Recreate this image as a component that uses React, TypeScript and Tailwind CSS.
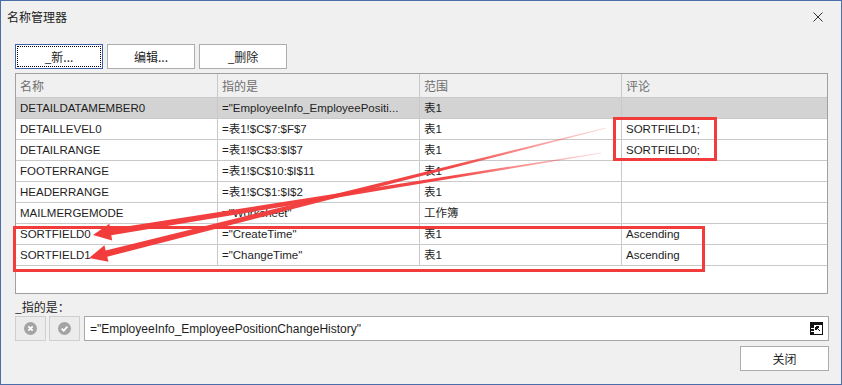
import React from 'react';

const rows: string[][] = [
  ['DETAILDATAMEMBER0', '="EmployeeInfo_EmployeePositi...', '表1', ''],
  ['DETAILLEVEL0', '=表1!$C$7:$F$7', '表1', 'SORTFIELD1;'],
  ['DETAILRANGE', '=表1!$C$3:$I$7', '表1', 'SORTFIELD0;'],
  ['FOOTERRANGE', '=表1!$C$10:$I$11', '表1', ''],
  ['HEADERRANGE', '=表1!$C$1:$I$2', '表1', ''],
  ['MAILMERGEMODE', '="Worksheet"', '工作簿', ''],
  ['SORTFIELD0', '="CreateTime"', '表1', 'Ascending'],
  ['SORTFIELD1', '="ChangeTime"', '表1', 'Ascending'],
];

// tapered arrow shape from (sx,sy) to tip (tx,ty)
const arrowPoints = (sx: number, sy: number, tx: number, ty: number) => {
  const dx = tx - sx;
  const dy = ty - sy;
  const len = Math.sqrt(dx * dx + dy * dy);
  const ux = dx / len;
  const uy = dy / len;
  const nx = -uy;
  const ny = ux;
  const bx = tx - 18 * ux;
  const by = ty - 18 * uy;
  const p = (x: number, y: number, w: number) => `${x + nx * w},${y + ny * w}`;
  return [
    p(sx, sy, 0.6),
    p(bx, by, 3.2),
    p(bx, by, 8.5),
    `${tx},${ty}`,
    p(bx, by, -8.5),
    p(bx, by, -3.2),
    p(sx, sy, -0.6),
  ].join(' ');
};

const Cell: React.FC<{ text: string; last?: boolean; header?: boolean }> = ({ text, last, header }) => (
  <div
    className={`flex items-center pl-[4px] overflow-hidden whitespace-nowrap ${last ? '' : 'border-r border-[#c9c9c9]'} ${
      header ? 'text-[#6e6e6e]' : 'pt-[2px]'
    }`}
  >
    {text}
  </div>
);

const App: React.FC = () => {
  return (
    <div className="relative w-[842px] h-[385px] overflow-hidden bg-[#f0f0f0] border border-[#4b6da9] font-['Liberation_Sans','Noto_Sans_CJK_SC',sans-serif] text-[11.5px] text-[#1e1e1e]">
      {/* title bar */}
      <div className="h-[31px] flex items-center justify-between pl-[6px] pr-[18px]">
        <span className="font-['Noto_Sans_CJK_SC',sans-serif] text-[12px] text-[#222]">名称管理器</span>
        <svg width="10" height="10" viewBox="0 0 10 10">
          <path d="M0.5 0.5 L9.5 9.5 M9.5 0.5 L0.5 9.5" stroke="#333" strokeWidth="1" />
        </svg>
      </div>

      {/* buttons */}
      <div className="flex gap-[4px] pl-[14px] mt-[12px]">
        <button className="w-[88px] h-[25px] bg-white border border-[#3d62a6] outline-1 outline-dotted outline-black -outline-offset-3 text-[12px] font-['Noto_Sans_CJK_SC',sans-serif]">
          _新...
        </button>
        <button className="w-[88px] h-[25px] bg-white border border-[#adadad] text-[12px] font-['Noto_Sans_CJK_SC',sans-serif]">
          编辑...
        </button>
        <button className="w-[88px] h-[25px] bg-white border border-[#adadad] text-[12px] font-['Noto_Sans_CJK_SC',sans-serif]">
          _删除
        </button>
      </div>

      {/* names table */}
      <div className="ml-[14px] mt-[4px] w-[813px] h-[221px] bg-white border border-[#a0a0a0] flex flex-col">
        <div className="h-[24px] shrink-0 grid grid-cols-[202px_202px_202px_1fr] bg-[#f0f0f0] border-b border-[#c9c9c9] font-['Noto_Sans_CJK_SC',sans-serif] text-[12px]">
          <Cell text="名称" header />
          <Cell text="指的是" header />
          <Cell text="范围" header />
          <Cell text="评论" header last />
        </div>
        {rows.map((r, i) => (
          <div
            key={i}
            className={`h-[21px] shrink-0 grid grid-cols-[202px_202px_202px_1fr] border-b border-[#c9c9c9] ${
              i === 0 ? 'bg-[#d3d3d3]' : ''
            }`}
          >
            <Cell text={r[0]} />
            <Cell text={r[1]} />
            <Cell text={r[2]} />
            <Cell text={r[3]} last />
          </div>
        ))}
      </div>

      {/* refers to */}
      <div className="h-[18px] mt-[4px] ml-[14px] flex items-center font-['Noto_Sans_CJK_SC',sans-serif] text-[12px]">
        _指的是：
      </div>
      <div className="h-[25px] flex pl-[14px] pr-[12px]">
        <div className="w-[31px] h-[25px] flex items-center justify-center bg-[#ececec] border border-[#cfcfcf]">
          <svg width="13" height="13" viewBox="0 0 13 13">
            <circle cx="6.5" cy="6.5" r="6.5" fill="#a3a3a3" />
            <path d="M4.3 4.3 L8.7 8.7 M8.7 4.3 L4.3 8.7" stroke="#fff" strokeWidth="1.8" />
          </svg>
        </div>
        <div className="ml-[3px] w-[31px] h-[25px] flex items-center justify-center bg-[#ececec] border border-[#cfcfcf]">
          <svg width="13" height="13" viewBox="0 0 13 13">
            <circle cx="6.5" cy="6.5" r="6.5" fill="#a3a3a3" />
            <path d="M3.6 6.6 L5.7 8.6 L9.4 4.6" stroke="#fff" strokeWidth="1.8" fill="none" />
          </svg>
        </div>
        <div className="ml-[4px] flex-1 h-[25px] bg-white border border-[#a8a8a8] flex items-center justify-between pl-[5px] pr-[5px] text-[12px]">
          <span className="pt-[1px]">="EmployeeInfo_EmployeePositionChangeHistory"</span>
          <svg width="13" height="13" viewBox="0 0 13 13" shapeRendering="crispEdges">
            <rect x="0.5" y="0.5" width="12" height="12" fill="#fff" stroke="#111" />
            <rect x="0" y="0" width="13" height="3" fill="#111" />
            <rect x="0" y="0" width="4" height="13" fill="#111" />
            <path d="M1 6.5 H4 M1 9.5 H4" stroke="#fff" />
            <path d="M6 5 L10 9 M6 5 H9 M6 5 V8" stroke="#111" strokeWidth="1.2" />
          </svg>
        </div>
      </div>

      <div className="flex justify-end pr-[12px] mt-[5px]">
        <button className="w-[89px] h-[25px] bg-white border border-[#adadad] text-[12px] font-['Noto_Sans_CJK_SC',sans-serif]">
          关闭
        </button>
      </div>

      {/* red annotations */}
      <svg className="absolute inset-0 pointer-events-none" width="842" height="385" viewBox="0 0 842 385">
        <defs>
          <linearGradient id="fadeA" gradientUnits="userSpaceOnUse" x1="605" y1="127" x2="88" y2="257">
            <stop offset="0" stopColor="#f23c3c" stopOpacity="0.15" />
            <stop offset="0.3" stopColor="#f23c3c" stopOpacity="0.95" />
            <stop offset="1" stopColor="#f23c3c" />
          </linearGradient>
          <linearGradient id="fadeB" gradientUnits="userSpaceOnUse" x1="600" y1="152" x2="92" y2="234">
            <stop offset="0" stopColor="#f23c3c" stopOpacity="0.15" />
            <stop offset="0.3" stopColor="#f23c3c" stopOpacity="0.95" />
            <stop offset="1" stopColor="#f23c3c" />
          </linearGradient>
        </defs>
        <rect x="613.5" y="117.5" width="101" height="41" fill="none" stroke="#f23c3c" strokeWidth="3" />
        <rect x="13.5" y="226.5" width="689" height="43" fill="none" stroke="#f23c3c" strokeWidth="3" />
        <polygon points={arrowPoints(605, 127, 88, 257)} fill="url(#fadeA)" />
        <polygon points={arrowPoints(600, 152, 92, 234)} fill="url(#fadeB)" />
      </svg>
    </div>
  );
};

export default App;
